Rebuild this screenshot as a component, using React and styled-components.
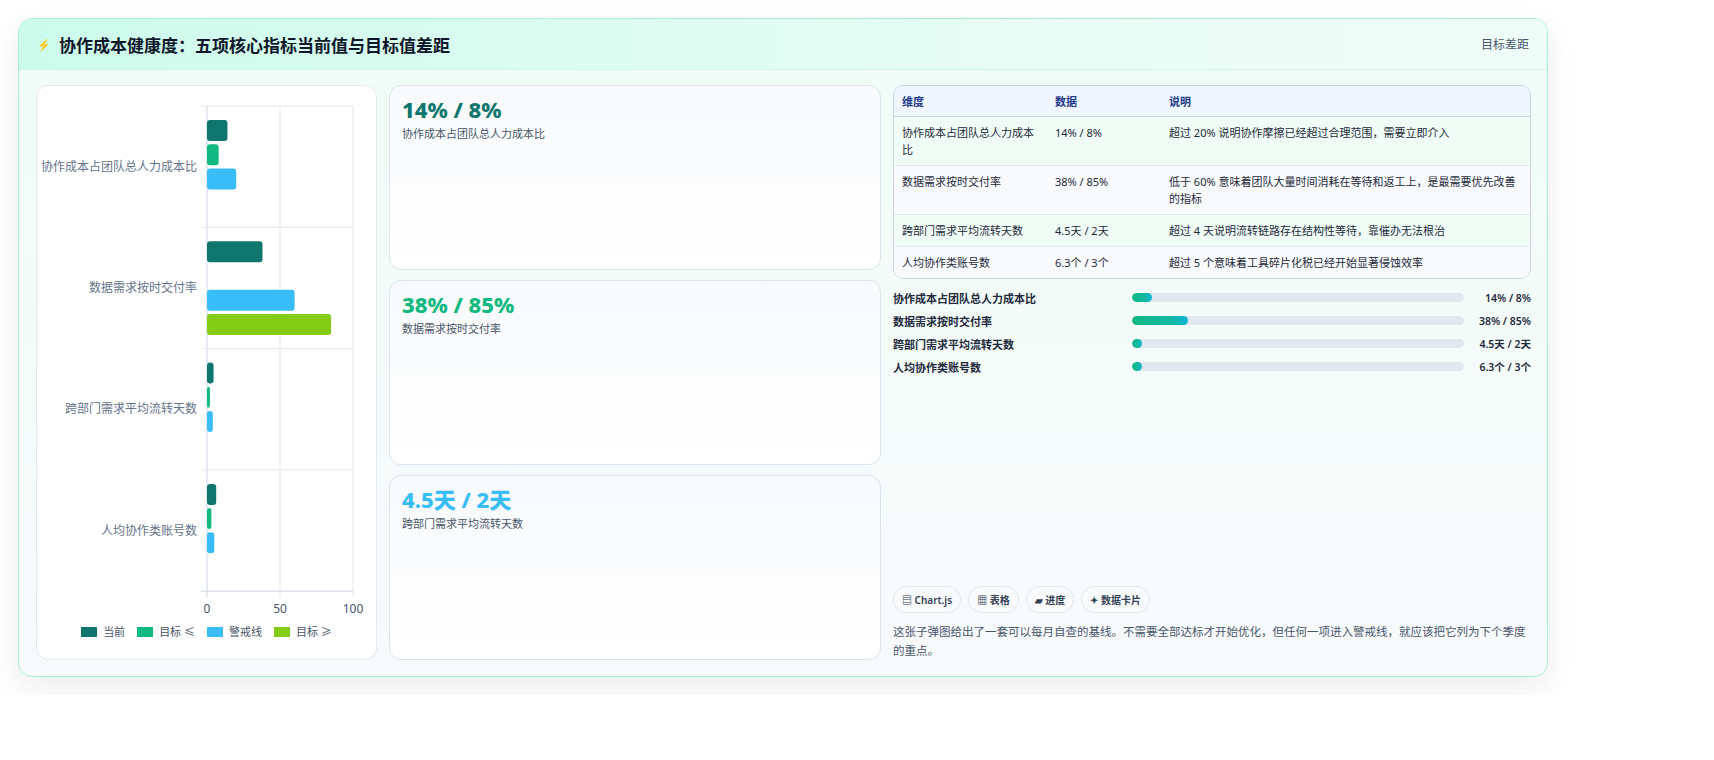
import styled, { createGlobalStyle } from 'styled-components';

const GlobalStyle = createGlobalStyle`
  body {
    margin: 0;
    background: #ffffff;
    font-family: "Noto Sans", "Noto Sans CJK SC", sans-serif;
    color: #0f172a;
  }
`;

const metrics = [
  { name: '协作成本占团队总人力成本比', value: '14% / 8%', note: '超过 20% 说明协作摩擦已经超过合理范围，需要立即介入', pct: 6, color: '#0f766e' },
  { name: '数据需求按时交付率', value: '38% / 85%', note: '低于 60% 意味着团队大量时间消耗在等待和返工上，是最需要优先改善的指标', pct: 17, color: '#10b981' },
  { name: '跨部门需求平均流转天数', value: '4.5天 / 2天', note: '超过 4 天说明流转链路存在结构性等待，靠催办无法根治', pct: 3, color: '#38bdf8' },
  { name: '人均协作类账号数', value: '6.3个 / 3个', note: '超过 5 个意味着工具碎片化税已经开始显著侵蚀效率', pct: 3 },
];

// bar values per category: [current, target<=, warning, target>=]
const chartRows = [
  [14, 8, 20, null],
  [38, null, 60, 85],
  [4.5, 2, 4, null],
  [6.3, 3, 5, null],
];
const series = [
  { label: '当前', color: '#0f766e' },
  { label: '目标 ≤', color: '#10b981' },
  { label: '警戒线', color: '#38bdf8' },
  { label: '目标 ≥', color: '#84cc16' },
];

const Page = styled.div`
  padding: 18px 166px 18px 18px;
`;

const Frame = styled.div`
  border: 1px solid #a7f3d0;
  border-radius: 14px;
  background: linear-gradient(180deg, #f0fdf7 0%, #f8fafc 100%);
  box-shadow: 0 10px 30px rgba(15, 23, 42, 0.08);
  overflow: hidden;
`;

const Header = styled.div`
  height: 50px;
  display: flex;
  align-items: center;
  justify-content: space-between;
  padding: 0 18px;
  background: linear-gradient(90deg, #ccfbec 0%, #e6fdf4 60%, #effdf8 100%);
  border-bottom: 1px solid #d1f5e6;
`;

const Title = styled.h1`
  margin: 0;
  font-size: 17px;
  font-weight: 700;
  display: flex;
  align-items: center;
  gap: 8px;
  color: #0f172a;
`;

const Bolt = styled.span`
  color: #2563eb;
  font-size: 11px;
`;

const HeaderTag = styled.span`
  font-size: 12px;
  color: #475569;
`;

const Body = styled.div`
  display: grid;
  grid-template-columns: 341px 492px 1fr;
  gap: 12px;
  padding: 15px 16px 16px 17px;
  height: 575px;
`;

const ChartCard = styled.div`
  background: #ffffff;
  border: 1px solid #e2e8f0;
  border-radius: 12px;
  display: flex;
  flex-direction: column;
  overflow: hidden;
`;

const Legend = styled.div`
  display: flex;
  justify-content: center;
  gap: 12px;
  font-size: 11px;
  line-height: 16px;
  color: #475569;
  padding: 10px 0 0;
`;

const LegendItem = styled.span`
  display: flex;
  align-items: center;
  gap: 6px;
  white-space: nowrap;
  &::before {
    content: '';
    width: 16px;
    height: 10px;
    background: ${(p) => p.$color};
  }
`;

const Cards = styled.div`
  display: grid;
  grid-template-rows: 1fr 1fr 1fr;
  gap: 10px;
`;

const StatCard = styled.div`
  border: 1px solid #dbe4ee;
  border-radius: 12px;
  background: linear-gradient(180deg, #f8fafc 0%, #ffffff 100%);
  padding: 10px 12px;
`;

const StatValue = styled.div`
  font-size: 22px;
  font-weight: 800;
  color: ${(p) => p.$color};
  line-height: 1.2;
`;

const StatLabel = styled.div`
  margin-top: 3px;
  font-size: 11px;
  color: #475569;
`;

const Right = styled.div`
  display: flex;
  flex-direction: column;
  gap: 10px;
`;

const Table = styled.table`
  width: 100%;
  border-collapse: separate;
  border-spacing: 0;
  border: 1px solid #cbd5e1;
  border-radius: 10px;
  overflow: hidden;
  font-size: 11px;
  color: #1e293b;
  background: #fff;
  th {
    text-align: left;
    background: #eff6ff;
    color: #1e3a8a;
    font-weight: 600;
    padding: 7px 8px;
    border-bottom: 1px solid #cbd5e1;
  }
  td {
    padding: 7px 8px;
    vertical-align: top;
    line-height: 1.55;
    border-bottom: 1px solid #e2e8f0;
  }
  tr:nth-child(odd) td { background: #f0fdf6; }
  tr:nth-child(even) td { background: #f8fafc; }
  tr:last-child td { border-bottom: none; }
`;

const Progress = styled.div`
  display: flex;
  flex-direction: column;
  gap: 6px;
`;

const ProgressRow = styled.div`
  display: grid;
  grid-template-columns: 231px 332px 1fr;
  gap: 8px;
  align-items: center;
  font-size: 11px;
  font-weight: 600;
  color: #1e293b;
  height: 17px;
  white-space: nowrap;
`;

const Track = styled.div`
  height: 9px;
  border-radius: 5px;
  background: #e2e8f0;
  overflow: hidden;
`;

const Fill = styled.div`
  height: 100%;
  border-radius: 5px;
  background: linear-gradient(90deg, #10b981, #14b8a6 70%, #06b6d4);
`;

const ProgressValue = styled.span`
  text-align: right;
  font-size: 10.5px;
`;

const Spacer = styled.div`
  flex: 1;
`;

const Tags = styled.div`
  display: flex;
  gap: 7px;
`;

const Tag = styled.span`
  font-size: 10px;
  font-weight: 600;
  color: #334155;
  background: #f8fafc;
  border: 1px solid #e2e8f0;
  border-radius: 14px;
  padding: 5px 8px;
`;

const Note = styled.p`
  margin: 0;
  font-size: 11.5px;
  line-height: 1.6;
  color: #475569;
`;

function BarChart() {
  const left = 170;
  const top = 20;
  const plotW = 146;
  const rowH = 121.3;
  const scale = plotW / 100;
  const labels = metrics.map((m) => m.name);
  return (
    <svg width="341" height="528" viewBox="0 0 341 528">
      {[0, 50, 100].map((v) => (
        <line key={v} x1={left + v * scale} x2={left + v * scale} y1={top} y2={top + rowH * 4 + 6} stroke={v === 0 ? '#cbd5e1' : '#e5e7eb'} />
      ))}
      {[0, 1, 2, 3, 4].map((i) => (
        <line key={i} x1={left - 6} x2={left + plotW} y1={top + i * rowH} y2={top + i * rowH} stroke={i === 4 ? '#cbd5e1' : '#e5e7eb'} />
      ))}
      {chartRows.map((row, r) =>
        row.map((v, s) =>
          v == null ? null : (
            <rect key={`${r}-${s}`} x={left} y={top + r * rowH + 14 + s * 24.2} width={Math.max(v * scale, 2)} height={21} rx={3} fill={series[s].color} />
          )
        )
      )}
      {labels.map((l, i) => (
        <text key={l} x={left - 10} y={top + i * rowH + rowH / 2 + 4} textAnchor="end" fontSize="12" fill="#64748b">{l}</text>
      ))}
      {[0, 50, 100].map((v) => (
        <text key={v} x={left + v * scale} y={top + rowH * 4 + 22} textAnchor="middle" fontSize="12" fill="#475569">{v}</text>
      ))}
    </svg>
  );
}

export default function App() {
  return (
    <>
      <GlobalStyle />
      <Page>
        <Frame>
          <Header>
            <Title><Bolt>⚡</Bolt>协作成本健康度：五项核心指标当前值与目标值差距</Title>
            <HeaderTag>目标差距</HeaderTag>
          </Header>
          <Body>
            <ChartCard>
              <BarChart />
              <Legend>
                {series.map((s) => (
                  <LegendItem key={s.label} $color={s.color}>{s.label}</LegendItem>
                ))}
              </Legend>
            </ChartCard>
            <Cards>
              {metrics.slice(0, 3).map((m) => (
                <StatCard key={m.name}>
                  <StatValue $color={m.color}>{m.value}</StatValue>
                  <StatLabel>{m.name}</StatLabel>
                </StatCard>
              ))}
            </Cards>
            <Right>
              <Table>
                <thead>
                  <tr><th style={{ width: 137 }}>维度</th><th style={{ width: 98 }}>数据</th><th>说明</th></tr>
                </thead>
                <tbody>
                  {metrics.map((m) => (
                    <tr key={m.name}><td>{m.name}</td><td>{m.value}</td><td>{m.note}</td></tr>
                  ))}
                </tbody>
              </Table>
              <Progress>
                {metrics.map((m) => (
                  <ProgressRow key={m.name}>
                    <span>{m.name}</span>
                    <Track><Fill style={{ width: `${m.pct}%` }} /></Track>
                    <ProgressValue>{m.value}</ProgressValue>
                  </ProgressRow>
                ))}
              </Progress>
              <Spacer />
              <Tags>
                <Tag>▤ Chart.js</Tag>
                <Tag>▦ 表格</Tag>
                <Tag>▰ 进度</Tag>
                <Tag>✦ 数据卡片</Tag>
              </Tags>
              <Note>这张子弹图给出了一套可以每月自查的基线。不需要全部达标才开始优化，但任何一项进入警戒线，就应该把它列为下个季度的重点。</Note>
            </Right>
          </Body>
        </Frame>
      </Page>
    </>
  );
}
